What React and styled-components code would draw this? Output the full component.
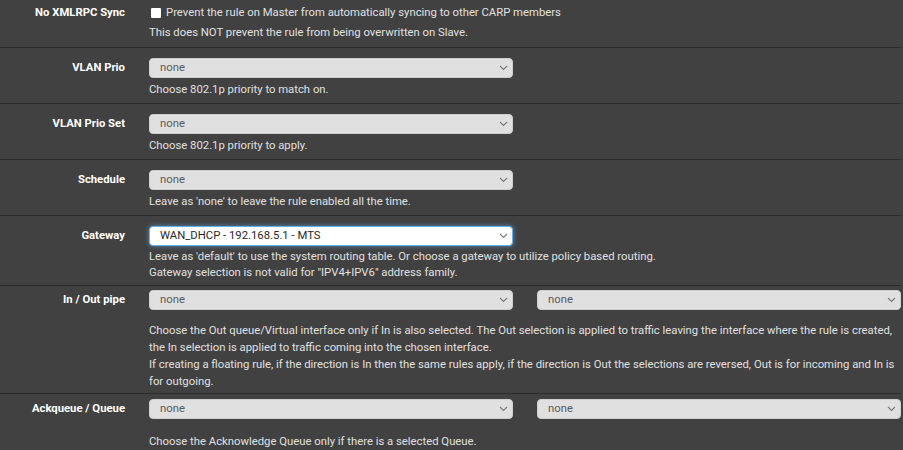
import React from "react";
import styled, { createGlobalStyle } from "styled-components";

const GlobalStyle = createGlobalStyle`
  html, body {
    margin: 0;
    padding: 0;
    background: #414141;
  }
  body {
    font-family: Roboto, "Liberation Sans", Arial, sans-serif;
    font-size: 11.3px;
    color: #e0e0e0;
  }
`;

const Chevron = () => (
  <svg width="9" height="6" viewBox="0 0 9 6">
    <path d="M1 1 L4.5 4.5 L8 1" fill="none" stroke="#7a7a7a" strokeWidth="1.1" />
  </svg>
);

const Select = ({ value, focused }) => (
  <SelectBox $focused={focused}>
    <span>{value}</span>
    <Chevron />
  </SelectBox>
);

const App = () => {
  return (
    <Page>
      <GlobalStyle />
      <Row $top={4} $bottom={6}>
        <Label $h={17}>No XMLRPC Sync</Label>
        <Control>
          <CheckLine>
            <Check />
            Prevent the rule on Master from automatically syncing to other CARP members
          </CheckLine>
          <Help>This does NOT prevent the rule from being overwritten on Slave.</Help>
        </Control>
      </Row>

      <Row>
        <Label>VLAN Prio</Label>
        <Control>
          <Select value="none" />
          <Help>Choose 802.1p priority to match on.</Help>
        </Control>
      </Row>

      <Row>
        <Label>VLAN Prio Set</Label>
        <Control>
          <Select value="none" />
          <Help>Choose 802.1p priority to apply.</Help>
        </Control>
      </Row>

      <Row>
        <Label>Schedule</Label>
        <Control>
          <Select value="none" />
          <Help>Leave as 'none' to leave the rule enabled all the time.</Help>
        </Control>
      </Row>

      <Row $bottom={4}>
        <Label>Gateway</Label>
        <Control>
          <Select value="WAN_DHCP - 192.168.5.1 - MTS" focused />
          <Help $lh={16}>
            Leave as 'default' to use the system routing table. Or choose a gateway to utilize policy based routing.
            <br />
            Gateway selection is not valid for "IPV4+IPV6" address family.
          </Help>
        </Control>
      </Row>

      <Row $top={4} $bottom={3}>
        <Label>In / Out pipe</Label>
        <Control>
          <Pair>
            <Select value="none" />
            <Select value="none" />
          </Pair>
          <Help $gap={12}>
            Choose the Out queue/Virtual interface only if In is also selected. The Out selection is applied to traffic leaving the interface where the rule is created,
            <br />
            the In selection is applied to traffic coming into the chosen interface.
            <br />
            If creating a floating rule, if the direction is In then the same rules apply, if the direction is Out the selections are reversed, Out is for incoming and In is
            <br />
            for outgoing.
          </Help>
        </Control>
      </Row>

      <Row $top={5} $bottom={10}>
        <Label>Ackqueue / Queue</Label>
        <Control>
          <Pair>
            <Select value="none" />
            <Select value="none" />
          </Pair>
          <Help $gap={14}>Choose the Acknowledge Queue only if there is a selected Queue.</Help>
        </Control>
      </Row>
    </Page>
  );
};

export default App;

const Page = styled.div`
  width: 903px;
  height: 450px;
  overflow: hidden;
  background: #414141;
  padding-right: 2px;
  box-sizing: border-box;
`;

const Row = styled.div`
  display: grid;
  grid-template-columns: 125px 1fr;
  column-gap: 24px;
  align-items: start;
  padding: ${p => p.$top ?? 10}px 0 ${p => p.$bottom ?? 5}px;
  border-bottom: 1px solid #2a2a2a;
`;

const Label = styled.div`
  text-align: right;
  font-weight: 700;
  color: #ffffff;
  line-height: ${p => p.$h ?? 20}px;
  white-space: nowrap;
`;

const Control = styled.div`
  display: flex;
  flex-direction: column;
  min-width: 0;
`;

const CheckLine = styled.div`
  display: flex;
  align-items: center;
  line-height: 17px;
  color: #e0e0e0;
`;

const Check = styled.span`
  width: 10px;
  height: 10px;
  margin: 0 5px 0 2px;
  background: #ffffff;
  border-radius: 1px;
  flex: none;
`;

const Help = styled.div`
  margin-top: ${p => p.$gap ?? 3}px;
  line-height: ${p => p.$lh ?? 17}px;
  color: #e0e0e0;
  white-space: nowrap;
`;

const Pair = styled.div`
  display: flex;
  gap: 24px;
`;

const SelectBox = styled.div`
  box-sizing: border-box;
  width: 364px;
  height: 20px;
  display: flex;
  align-items: center;
  justify-content: space-between;
  padding: 0 4px 0 10px;
  border-radius: 4px;
  background: ${p => (p.$focused ? "#ffffff" : "#e0e0e0")};
  border: 1px solid ${p => (p.$focused ? "#66afe9" : "#cfcfcf")};
  box-shadow: ${p => (p.$focused ? "0 0 5px rgba(102, 175, 233, 0.7)" : "none")};
  color: ${p => (p.$focused ? "#2a2a2a" : "#5a5a5a")};
  font-size: 11.3px;
  line-height: 18px;
`;
